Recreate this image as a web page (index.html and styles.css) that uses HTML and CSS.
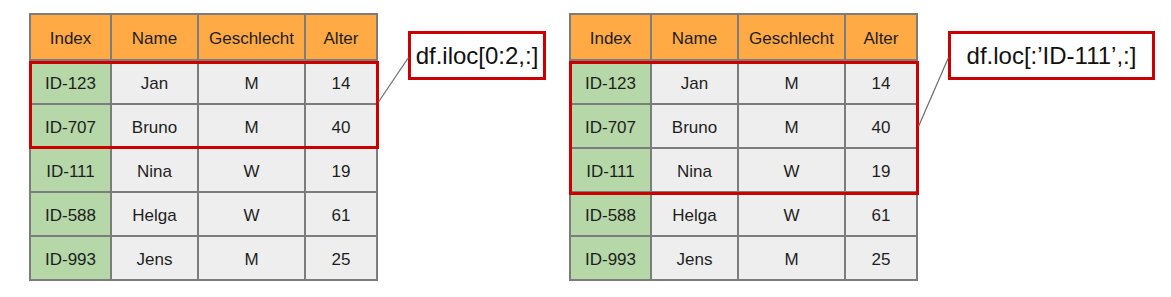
FILE: index.html
```html
<!DOCTYPE html>
<html lang="de">
<head>
<meta charset="utf-8">
<title>iloc vs loc</title>
<link rel="stylesheet" href="styles.css">
</head>
<body>
<div class="page">
  <section class="group">
    <div class="table-wrap">
      <div class="grid">
        <div class="cell head">Index</div><div class="cell head">Name</div><div class="cell head">Geschlecht</div><div class="cell head">Alter</div>
        <div class="cell idx">ID-123</div><div class="cell">Jan</div><div class="cell">M</div><div class="cell">14</div>
        <div class="cell idx">ID-707</div><div class="cell">Bruno</div><div class="cell">M</div><div class="cell">40</div>
        <div class="cell idx">ID-111</div><div class="cell">Nina</div><div class="cell">W</div><div class="cell">19</div>
        <div class="cell idx">ID-588</div><div class="cell">Helga</div><div class="cell">W</div><div class="cell">61</div>
        <div class="cell idx">ID-993</div><div class="cell">Jens</div><div class="cell">M</div><div class="cell">25</div>
      </div>
      <div class="sel sel-two"></div>
    </div>
    <div class="callout callout-iloc">df.iloc[0:2,:]</div>
  </section>
  <section class="group">
    <div class="table-wrap">
      <div class="grid">
        <div class="cell head">Index</div><div class="cell head">Name</div><div class="cell head">Geschlecht</div><div class="cell head">Alter</div>
        <div class="cell idx">ID-123</div><div class="cell">Jan</div><div class="cell">M</div><div class="cell">14</div>
        <div class="cell idx">ID-707</div><div class="cell">Bruno</div><div class="cell">M</div><div class="cell">40</div>
        <div class="cell idx">ID-111</div><div class="cell">Nina</div><div class="cell">W</div><div class="cell">19</div>
        <div class="cell idx">ID-588</div><div class="cell">Helga</div><div class="cell">W</div><div class="cell">61</div>
        <div class="cell idx">ID-993</div><div class="cell">Jens</div><div class="cell">M</div><div class="cell">25</div>
      </div>
      <div class="sel sel-three"></div>
    </div>
    <div class="callout callout-loc">df.loc[:’ID-111’,:]</div>
  </section>
  <svg class="connectors" width="1171" height="297" viewBox="0 0 1171 297">
    <line x1="408.5" y1="57.5" x2="378.5" y2="102" />
    <line x1="948.5" y1="57.5" x2="918.5" y2="126.5" />
  </svg>
</div>
</body>
</html>
```

FILE: styles.css
```css
* { box-sizing: border-box; }

html, body {
  margin: 0;
  padding: 0;
  background: #ffffff;
}

body {
  width: 1171px;
  height: 297px;
  overflow: hidden;
  font-family: "Liberation Sans", Arial, sans-serif;
  color: #1e1e1e;
}

.page {
  position: relative;
  display: flex;
  padding: 13px 0 0 29px;
  height: 297px;
}

.group {
  display: flex;
  align-items: flex-start;
  width: 540px;
  flex: none;
}

.table-wrap {
  position: relative;
  flex: none;
}

.grid {
  display: grid;
  grid-template-columns: 79px 85px 105px 70px;
  grid-template-rows: 44px repeat(5, 42px);
  gap: 2px;
  padding: 2px;
  background: #7c7c7c;
}

.cell {
  display: flex;
  align-items: center;
  justify-content: center;
  background: #eeeeee;
  font-size: 17px;
  line-height: 1;
  padding-top: 2px;
}

.cell.head {
  background: #ffaa44;
}

.cell.idx {
  background: #b6d7a8;
}

.sel {
  position: absolute;
  left: 0;
  top: 48px;
  width: 350px;
  border: 3px solid #cc0000;
}

.sel-two { height: 88px; }
.sel-three { height: 134px; }

.callout {
  flex: none;
  margin: 18px 0 0 30px;
  height: 49px;
  border: 3px solid #cc0000;
  background: #ffffff;
  display: flex;
  align-items: center;
  justify-content: center;
  font-size: 24px;
  line-height: 1;
  color: #111111;
}

.callout-iloc { width: 138px; }
.callout-loc { width: 207px; }

.connectors {
  position: absolute;
  left: 0;
  top: 0;
  pointer-events: none;
}

.connectors line {
  stroke: #6a6a6a;
  stroke-width: 1.2;
}
```
